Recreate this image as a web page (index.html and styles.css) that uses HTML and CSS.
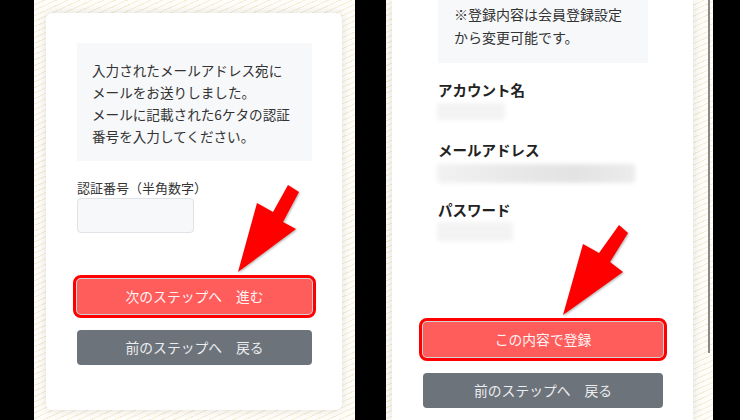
FILE: index.html
```html
<!DOCTYPE html>
<html lang="ja">
<head>
<meta charset="utf-8">
<link rel="stylesheet" href="styles.css">
</head>
<body>
<div class="stage">
  <section class="panel panel-left">
    <div class="card card-left">
      <div class="note note-left">入力されたメールアドレス宛に<br>メールをお送りしました。<br>メールに記載された6ケタの認証<br>番号を入力してください。</div>
      <div class="field-label">認証番号（半角数字）</div>
      <div class="code-input"></div>
      <div class="btn btn-primary btn-marked btn-first-left">次のステップへ　進む</div>
      <div class="btn btn-secondary">前のステップへ　戻る</div>
    </div>
    <svg class="arrow arrow-left" width="80" height="100" viewBox="0 0 80 100">
      <polygon points="54,1 65,8 49,38 62,45 4,88 23,19 39,28" fill="#ff0000"/>
    </svg>
  </section>
  <section class="panel panel-right">
    <div class="card card-right">
      <div class="form-part">
        <div class="note note-right">※登録内容は会員登録設定<br>から変更可能です。</div>
        <div class="item-label first">アカウント名</div>
        <div class="blur blur-a"></div>
        <div class="item-label">メールアドレス</div>
        <div class="blur blur-b"></div>
        <div class="item-label third">パスワード</div>
        <div class="blur blur-c"></div>
      </div>
      <div class="btn btn-primary btn-marked btn-first-right">この内容で登録</div>
      <div class="btn btn-secondary">前のステップへ　戻る</div>
    </div>
    <div class="scrollbar"></div>
    <svg class="arrow arrow-right" width="80" height="100" viewBox="0 0 80 100">
      <polygon points="60,1 69,9 51,38 64,48 4,91 24,20 40,29" fill="#ff0000"/>
    </svg>
  </section>
</div>
</body>
</html>
```

FILE: styles.css
```css
html, body {
  margin: 0;
  padding: 0;
  background: #000;
}
body {
  width: 740px;
  height: 420px;
  overflow: hidden;
  font-family: "Noto Sans CJK JP", "Noto Sans", sans-serif;
  color: #333;
}
.stage {
  display: flex;
  height: 420px;
  padding-left: 34px;
  gap: 31px;
}
.panel {
  position: relative;
  height: 420px;
  box-sizing: border-box;
  background-color: #fdfcf7;
  background-image: repeating-linear-gradient(155deg, #fefdf9 0 4px, #f4eed6 4px 5px);
  overflow: hidden;
}
.panel-left {
  width: 321px;
  padding: 13px 13px 0 12px;
}
.panel-right {
  width: 327px;
  padding: 0 20px 0 6px;
}
.card {
  background: #fff;
  box-shadow: 0 0 10px rgba(0, 0, 0, 0.12);
  box-sizing: border-box;
}
.card-left {
  height: 397px;
  border-radius: 6px;
  padding: 30px 30px 0 31px;
}
.card-right {
  height: 420px;
  padding: 0 30px 0 31px;
}
.note {
  background: #f7f8fa;
  letter-spacing: 0;
}
.note-left {
  font-size: 13.6px;
  line-height: 22px;
  padding: 16px 10px 14px 15px;
}
.note-right {
  font-size: 14px;
  line-height: 23px;
  padding: 2.5px 10px 14.5px 16px;
}
.field-label {
  margin-top: 17px;
  font-size: 13px;
  line-height: 20px;
}
.code-input {
  width: 117px;
  height: 35px;
  box-sizing: border-box;
  background: #f7f8fa;
  border: 1px solid #dfe2e6;
  border-radius: 4px;
}
.btn {
  height: 35px;
  line-height: 35px;
  border-radius: 4px;
  text-align: center;
  font-size: 13.8px;
  color: #fff;
}
.btn-primary {
  background: #ff5c5c;
  color: #fff4f4;
}
.btn-marked {
  outline: 3px solid #ff0000;
  outline-offset: 1px;
  box-shadow: 0 0 0 1px #cfd3d3, 0 0 0 2px #dde0e0;
}
.btn-secondary {
  background: #6c737b;
  color: #eceef0;
  margin-top: 16px;
}
.btn-first-left {
  margin-top: 46px;
}
.form-part {
  padding: 0 15px;
}
.item-label {
  font-weight: bold;
  font-size: 14.5px;
  line-height: 20px;
  margin-top: 20px;
  color: #222;
}
.item-label.first {
  margin-top: 17px;
}
.item-label.third {
  margin-top: 17px;
}
.blur {
  margin-top: 3px;
  margin-left: -1px;
  height: 17px;
  filter: blur(2px);
  border-radius: 3px;
}
.blur-a {
  width: 68px;
  background: #f3f3f3;
}
.blur-b {
  width: 198px;
  height: 19px;
  margin-top: 4px;
  background: linear-gradient(90deg, #f2f2f2, #e8e8e8 40%, #e3e3e3 70%, #ececec);
}
.blur-c {
  width: 76px;
  height: 19px;
  margin-top: 2px;
  background: #f3f3f3;
}
.btn-first-right {
  margin-top: 81px;
}
.scrollbar {
  position: absolute;
  top: 0;
  right: 3px;
  width: 2px;
  height: 353px;
  background: #8a8a8a;
}
.arrow {
  position: absolute;
  filter: drop-shadow(1px 1px 1px rgba(0, 0, 0, 0.3));
}
.arrow-left {
  left: 200px;
  top: 184px;
}
.arrow-right {
  left: 173px;
  top: 224px;
}
```
